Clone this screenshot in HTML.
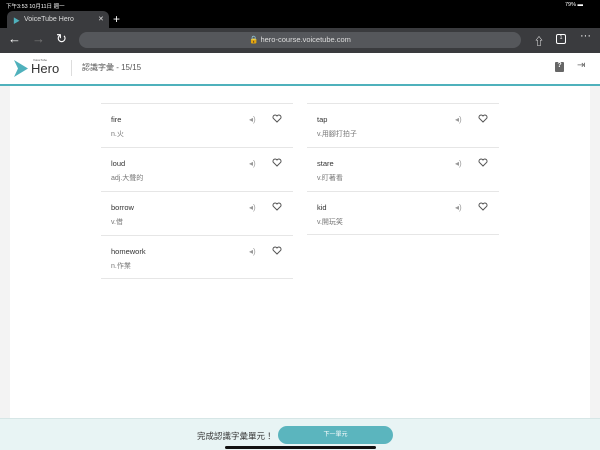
<!DOCTYPE html>
<html><head><meta charset="utf-8"><style>
*{margin:0;padding:0;box-sizing:border-box}
body{width:600px;height:450px;overflow:hidden;background:#f3f3f3;font-family:"Liberation Sans","Noto Sans CJK TC",sans-serif;position:relative}
.abs{position:absolute}
.top{left:0;top:0;width:600px;height:28px;background:#000}
.tab{left:7px;top:11px;width:102px;height:18px;background:#3a3b3e;border-radius:6px 6px 0 0;color:#ddd;font-size:7px}
.bar{left:0;top:28px;width:600px;height:25px;background:#3a3b3e}
.url{left:79px;top:32px;width:442px;height:16px;background:#55575b;border-radius:8px;color:#ddd;font-size:7.5px;text-align:center;line-height:16px}
.hdr{left:0;top:53px;width:600px;height:31px;background:#fff}
.teal{left:0;top:84px;width:600px;height:2px;background:#4fb1bc}
.main{left:10px;top:86px;width:580px;height:332px;background:#fff}
.row{position:absolute;width:192px;height:44px;border-top:1px solid #e6e6e6}
.w{position:absolute;left:10px;top:11px;font-size:7.5px;color:#333}
.d{position:absolute;left:10px;top:25px;font-size:7px;color:#777}
.sp{position:absolute;left:148px;top:11px;font-size:8px;color:#999}
.ht{position:absolute;left:171px;top:10px}
.foot{left:0;top:418px;width:600px;height:32px;background:#e8f4f4;border-top:1px solid #d6e6e6}
</style></head><body>
<div class="abs top"><span class="abs" style="left:6px;top:2px;color:#fff;font-size:5.5px">下午3:53 10月11日 週一</span><span class="abs" style="left:565px;top:2px;color:#fff;font-size:5.5px">79% ▬</span></div>
<div class="abs tab"><span class="abs" style="left:6px;top:5px;color:#4fb1bc">▶</span><span class="abs" style="left:17px;top:5px">VoiceTube Hero</span><span class="abs" style="left:91px;top:4px">✕</span></div>
<span class="abs" style="left:113px;top:12px;color:#fff;font-size:12px">+</span>
<div class="abs bar"><span class="abs" style="left:8px;top:3px;color:#fff;font-size:13px">←</span><span class="abs" style="left:32px;top:3px;color:#777;font-size:13px">→</span><span class="abs" style="left:56px;top:3px;color:#fff;font-size:13px">↻</span>
<span class="abs" style="left:534px;top:5px;color:#fff;font-size:10px">⇧</span><span class="abs" style="left:556px;top:6px;width:10px;height:10px;border:1px solid #fff;border-radius:2px;color:#fff;font-size:5px;text-align:center">1</span><span class="abs" style="left:580px;top:2px;color:#fff;font-size:11px">···</span></div>
<div class="abs url">🔒 hero-course.voicetube.com</div>
<div class="abs hdr">
<svg class="abs" style="left:13px;top:6px" width="16" height="19"><path d="M1 1 L15 9.5 L1 18 L5 9.5Z" fill="#4fb1bc"/></svg>
<span class="abs" style="left:33px;top:5px;font-size:3px;color:#555">VoiceTube</span>
<span class="abs" style="left:31px;top:8px;font-size:13px;color:#333">Hero</span>
<div class="abs" style="left:71px;top:7px;width:1px;height:16px;background:#ddd"></div>
<span class="abs" style="left:82px;top:9px;font-size:8px;color:#555">認識字彙 - 15/15</span>
<span class="abs" style="left:555px;top:9px;width:9px;height:10px;background:#666;color:#fff;font-size:7px;text-align:center;font-weight:bold;border-radius:1px">?</span>
<span class="abs" style="left:577px;top:7px;font-size:10px;color:#666">⇥</span>
</div>
<div class="abs teal"></div>
<div class="abs main">
</div>
<div class="abs" style="left:0;top:0">
<div class="row" style="left:101px;top:103px"><span class="w">fire</span><span class="d">n.火</span><span class="sp">◂)</span><svg class="ht" width="10" height="9"><path d="M5 8 L1.2 4.2 A2.2 2.2 0 0 1 5 2 A2.2 2.2 0 0 1 8.8 4.2Z" fill="none" stroke="#555" stroke-width="1"/></svg></div>
<div class="row" style="left:101px;top:147px"><span class="w">loud</span><span class="d">adj.大聲的</span><span class="sp">◂)</span><svg class="ht" width="10" height="9"><path d="M5 8 L1.2 4.2 A2.2 2.2 0 0 1 5 2 A2.2 2.2 0 0 1 8.8 4.2Z" fill="none" stroke="#555" stroke-width="1"/></svg></div>
<div class="row" style="left:101px;top:191px"><span class="w">borrow</span><span class="d">v.借</span><span class="sp">◂)</span><svg class="ht" width="10" height="9"><path d="M5 8 L1.2 4.2 A2.2 2.2 0 0 1 5 2 A2.2 2.2 0 0 1 8.8 4.2Z" fill="none" stroke="#555" stroke-width="1"/></svg></div>
<div class="row" style="left:101px;top:235px;border-bottom:1px solid #e6e6e6"><span class="w">homework</span><span class="d">n.作業</span><span class="sp">◂)</span><svg class="ht" width="10" height="9"><path d="M5 8 L1.2 4.2 A2.2 2.2 0 0 1 5 2 A2.2 2.2 0 0 1 8.8 4.2Z" fill="none" stroke="#555" stroke-width="1"/></svg></div>
<div class="row" style="left:307px;top:103px"><span class="w">tap</span><span class="d">v.用腳打拍子</span><span class="sp">◂)</span><svg class="ht" width="10" height="9"><path d="M5 8 L1.2 4.2 A2.2 2.2 0 0 1 5 2 A2.2 2.2 0 0 1 8.8 4.2Z" fill="none" stroke="#555" stroke-width="1"/></svg></div>
<div class="row" style="left:307px;top:147px"><span class="w">stare</span><span class="d">v.盯著看</span><span class="sp">◂)</span><svg class="ht" width="10" height="9"><path d="M5 8 L1.2 4.2 A2.2 2.2 0 0 1 5 2 A2.2 2.2 0 0 1 8.8 4.2Z" fill="none" stroke="#555" stroke-width="1"/></svg></div>
<div class="row" style="left:307px;top:191px;border-bottom:1px solid #e6e6e6"><span class="w">kid</span><span class="d">v.開玩笑</span><span class="sp">◂)</span><svg class="ht" width="10" height="9"><path d="M5 8 L1.2 4.2 A2.2 2.2 0 0 1 5 2 A2.2 2.2 0 0 1 8.8 4.2Z" fill="none" stroke="#555" stroke-width="1"/></svg></div>
</div>
<div class="abs foot">
<span class="abs" style="left:197px;top:11px;font-size:8.5px;color:#333">完成認識字彙單元！</span>
<div class="abs" style="left:278px;top:7px;width:115px;height:18px;background:#5bb5be;border-radius:9px;color:#fff;font-size:6px;text-align:center;line-height:18px">下一單元</div>
<div class="abs" style="left:225px;top:27px;width:151px;height:3px;background:#111;border-radius:2px"></div>
</div>
</body></html>
